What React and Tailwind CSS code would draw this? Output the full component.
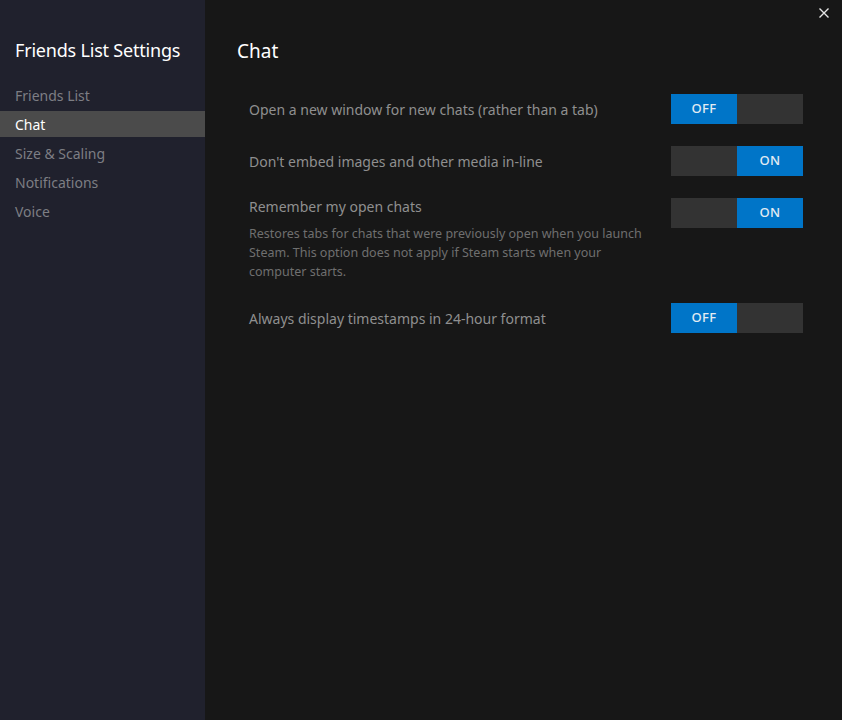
import { useState } from 'react';

const navItems = ['Friends List', 'Chat', 'Size & Scaling', 'Notifications', 'Voice'];

const Toggle = ({ on, onChange }) => (
  <button
    onClick={onChange}
    className="flex w-[132px] h-[30px] shrink-0 text-[13px] font-medium text-[#e3ecf3] tracking-wide"
  >
    <span className={`w-1/2 h-full flex items-center justify-center ${on ? 'bg-[#333333]' : 'bg-[#0075c8]'}`}>
      {on ? '' : 'OFF'}
    </span>
    <span className={`w-1/2 h-full flex items-center justify-center ${on ? 'bg-[#0075c8]' : 'bg-[#333333]'}`}>
      {on ? 'ON' : ''}
    </span>
  </button>
);

const App = () => {
  const [active, setActive] = useState('Chat');
  const [opts, setOpts] = useState({ newWindow: false, noEmbed: true, remember: true, h24: false });
  const flip = (k) => setOpts((o) => ({ ...o, [k]: !o[k] }));

  return (
    <div
      className="flex h-screen w-full bg-[#171717] relative"
      style={{ fontFamily: '"Noto Sans", "Open Sans", Arial, sans-serif' }}
    >
      {/* Sidebar */}
      <div className="w-[205px] shrink-0 bg-[#20212d] pt-[36px]">
        <h1 className="px-[15px] whitespace-nowrap text-[18px] tracking-[-0.2px] leading-[28px] text-white">
          Friends List Settings
        </h1>
        <div className="mt-[18px] flex flex-col gap-[3px]">
          {navItems.map((item) => (
            <div
              key={item}
              onClick={() => setActive(item)}
              className={`h-[26px] px-[15px] flex items-center text-[14px] cursor-pointer ${
                active === item ? 'bg-[#4b4b4b] text-white' : 'text-[#7d7e84]'
              }`}
            >
              {item}
            </div>
          ))}
        </div>
      </div>

      {/* Contenido */}
      <div className="flex-1 pl-[32px] pr-[39px] pt-[37px]">
        <h2 className="text-[19px] leading-[28px] text-white">Chat</h2>
        <div className="mt-[29px] pl-[12px] flex flex-col gap-[22px]">
          <div className="flex items-center justify-between">
            <span className="text-[14px] text-[#8f8f8f]">Open a new window for new chats (rather than a tab)</span>
            <Toggle on={opts.newWindow} onChange={() => flip('newWindow')} />
          </div>
          <div className="flex items-center justify-between">
            <span className="text-[14px] text-[#8f8f8f]">Don't embed images and other media in-line</span>
            <Toggle on={opts.noEmbed} onChange={() => flip('noEmbed')} />
          </div>
          <div className="flex items-start justify-between">
            <div className="w-[410px]">
              <div className="text-[14px] leading-[18px] text-[#8f8f8f]">Remember my open chats</div>
              <p className="mt-[8px] text-[12.5px] leading-[19px] text-[#6f6f6f]">
                Restores tabs for chats that were previously open when you launch Steam. This option does not apply if Steam starts when your computer starts.
              </p>
            </div>
            <Toggle on={opts.remember} onChange={() => flip('remember')} />
          </div>
          <div className="flex items-center justify-between">
            <span className="text-[14px] text-[#8f8f8f]">Always display timestamps in 24-hour format</span>
            <Toggle on={opts.h24} onChange={() => flip('h24')} />
          </div>
        </div>
      </div>

      {/* Cerrar */}
      <button className="absolute top-[8px] right-[13px] w-[10px] h-[10px]">
        <svg viewBox="0 0 10 10" className="w-[10px] h-[10px]" stroke="#e6e6e6" strokeWidth="1.4">
          <path d="M0.5 0.5 L9.5 9.5 M9.5 0.5 L0.5 9.5" />
        </svg>
      </button>
    </div>
  );
};

export default App;
